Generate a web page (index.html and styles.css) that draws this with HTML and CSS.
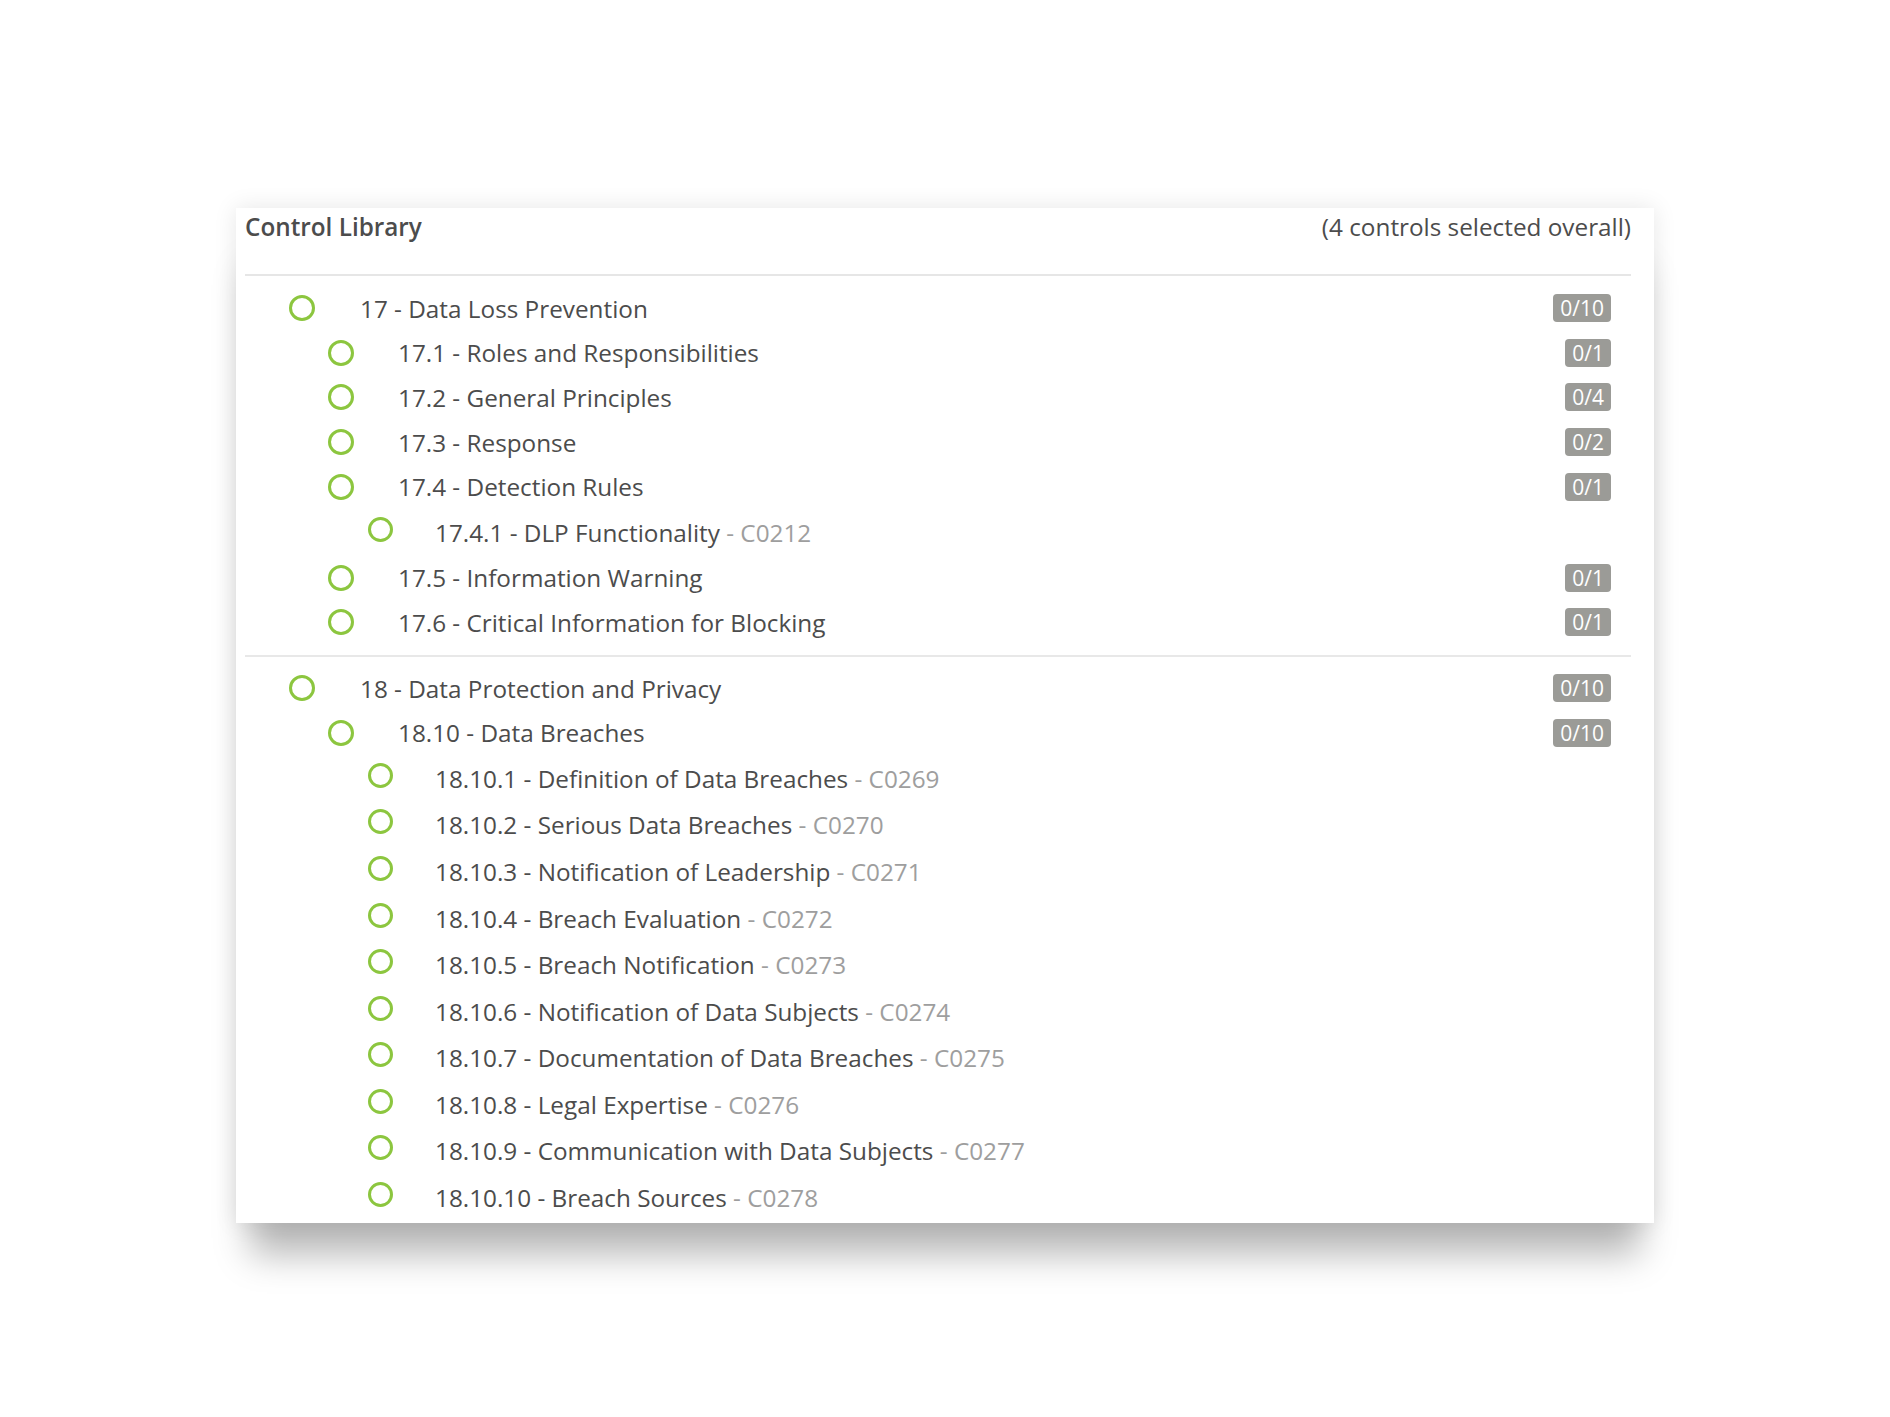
FILE: index.html
```html
<!DOCTYPE html>
<html lang="en">
<head>
<meta charset="utf-8">
<title>Control Library</title>
<link rel="stylesheet" href="styles.css">
</head>
<body>
<div class="card">
  <div class="card-head">
    <span class="title">Control Library</span>
    <span class="summary">(4 controls selected overall)</span>
  </div>

  <div class="section">
    <div class="row l1"><span class="radio"></span><span class="label">17 - Data Loss Prevention</span><span class="badge">0/10</span></div>
    <div class="row l2"><span class="radio"></span><span class="label">17.1 - Roles and Responsibilities</span><span class="badge">0/1</span></div>
    <div class="row l2"><span class="radio"></span><span class="label">17.2 - General Principles</span><span class="badge">0/4</span></div>
    <div class="row l2"><span class="radio"></span><span class="label">17.3 - Response</span><span class="badge">0/2</span></div>
    <div class="row l2"><span class="radio"></span><span class="label">17.4 - Detection Rules</span><span class="badge">0/1</span></div>
    <div class="row l3 leaf"><span class="radio"></span><span class="label">17.4.1 - DLP Functionality<span class="code"> - C0212</span></span></div>
    <div class="row l2"><span class="radio"></span><span class="label">17.5 - Information Warning</span><span class="badge">0/1</span></div>
    <div class="row l2"><span class="radio"></span><span class="label">17.6 - Critical Information for Blocking</span><span class="badge">0/1</span></div>
  </div>

  <div class="section">
    <div class="row l1"><span class="radio"></span><span class="label">18 - Data Protection and Privacy</span><span class="badge">0/10</span></div>
    <div class="row l2"><span class="radio"></span><span class="label">18.10 - Data Breaches</span><span class="badge">0/10</span></div>
    <div class="row l3 leaf"><span class="radio"></span><span class="label">18.10.1 - Definition of Data Breaches<span class="code"> - C0269</span></span></div>
    <div class="row l3 leaf"><span class="radio"></span><span class="label">18.10.2 - Serious Data Breaches<span class="code"> - C0270</span></span></div>
    <div class="row l3 leaf"><span class="radio"></span><span class="label">18.10.3 - Notification of Leadership<span class="code"> - C0271</span></span></div>
    <div class="row l3 leaf"><span class="radio"></span><span class="label">18.10.4 - Breach Evaluation<span class="code"> - C0272</span></span></div>
    <div class="row l3 leaf"><span class="radio"></span><span class="label">18.10.5 - Breach Notification<span class="code"> - C0273</span></span></div>
    <div class="row l3 leaf"><span class="radio"></span><span class="label">18.10.6 - Notification of Data Subjects<span class="code"> - C0274</span></span></div>
    <div class="row l3 leaf"><span class="radio"></span><span class="label">18.10.7 - Documentation of Data Breaches<span class="code"> - C0275</span></span></div>
    <div class="row l3 leaf"><span class="radio"></span><span class="label">18.10.8 - Legal Expertise<span class="code"> - C0276</span></span></div>
    <div class="row l3 leaf"><span class="radio"></span><span class="label">18.10.9 - Communication with Data Subjects<span class="code"> - C0277</span></span></div>
    <div class="row l3 leaf"><span class="radio"></span><span class="label">18.10.10 - Breach Sources<span class="code"> - C0278</span></span></div>
  </div>
</div>
</body>
</html>
```
FILE: styles.css
```css
html, body {
  margin: 0;
  padding: 0;
  background: #ffffff;
}

html {
  height: 100%;
}

body {
  min-height: 100%;
  box-sizing: border-box;
  padding-top: 208px;
  font-family: "Open Sans", "Noto Sans", "Liberation Sans", sans-serif;
  color: #4c4c4c;
  font-size: 24.3px;
}

.card {
  margin: 0 0 0 236px;
  width: 1418px;
  box-sizing: border-box;
  background: #ffffff;
  padding: 0 23px 2px 9px;
  box-shadow: 0 0 22px rgba(0, 0, 0, 0.10), 0 46px 34px -14px rgba(0, 0, 0, 0.28);
}

.card-head {
  display: flex;
  justify-content: space-between;
  align-items: flex-start;
  height: 66px;
  border-bottom: 2px solid #e6e6e6;
  line-height: 38px;
}

.title {
  font-weight: 600;
  color: #4c4c4c;
}

.summary {
  color: #4c4c4c;
}

.section {
  padding: 10px 0 10px;
}

.section + .section {
  border-top: 2px solid #e8e8e8;
  padding-top: 9px;
  padding-bottom: 0;
}

.row {
  display: flex;
  align-items: center;
  height: 44.6px;
  padding-right: 20px;
}

.row.leaf {
  height: 46.6px;
}

.radio {
  flex: none;
  width: 26px;
  height: 26px;
  box-sizing: border-box;
  border: 3px solid #8cc63f;
  border-radius: 50%;
}

.leaf .radio {
  width: 25px;
  height: 25px;
  position: relative;
  top: -3px;
}

.l1 { padding-left: 44px; }
.l1 .radio { margin-right: 45px; }

.l2 { padding-left: 83px; }
.l2 .radio { margin-right: 44px; }

.l3 { padding-left: 123px; }
.l3 .radio { margin-right: 42px; }

.label {
  flex: 1;
  white-space: nowrap;
}

.code {
  color: #9e9e9e;
}

.badge {
  flex: none;
  height: 28px;
  line-height: 28px;
  padding: 0 7px;
  border-radius: 4px;
  background: #9b9b97;
  color: #ffffff;
  font-size: 21px;
}
```
